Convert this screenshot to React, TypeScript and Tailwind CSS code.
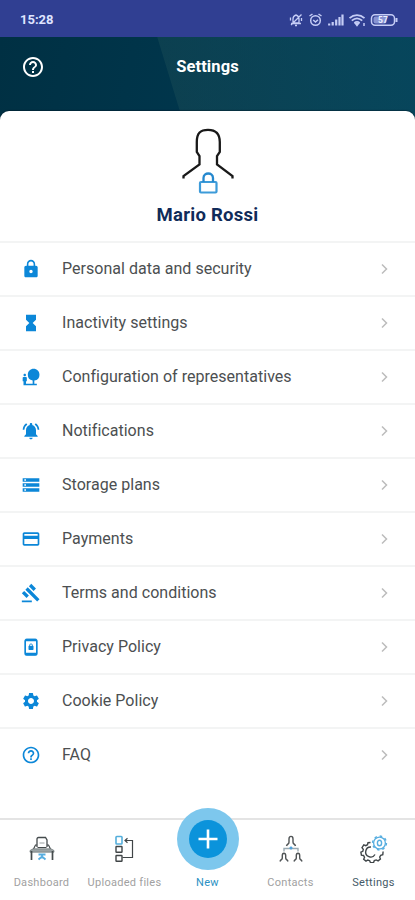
import type { ReactNode } from 'react';
import {
  MdLock, MdHourglassFull, MdNaturePeople, MdNotificationsActive, MdStorage, MdPayment,
  MdGavel, MdSettings, MdHelpOutline,
} from 'react-icons/md';

function PrivacyIcon({ className }: { className?: string }) {
  return (
    <svg className={className} viewBox="0 0 24 24" fill="none" stroke="currentColor">
      <rect x="5" y="3" width="14" height="18.500" rx="2" strokeWidth="2" />
      <path d="M5.500 3.500h13M5.500 20.500h13" strokeWidth="3" />
      <rect x="9" y="10.500" width="6" height="5" rx=".8" fill="currentColor" stroke="none" />
      <path d="M10.200 11V9.800c0-2 3.600-2 3.600 0V11" strokeWidth="1" />
    </svg>
  );
}

const rows = [
  { label: 'Personal data and security', Icon: MdLock },
  { label: 'Inactivity settings', Icon: MdHourglassFull },
  { label: 'Configuration of representatives', Icon: MdNaturePeople },
  { label: 'Notifications', Icon: MdNotificationsActive },
  { label: 'Storage plans', Icon: MdStorage },
  { label: 'Payments', Icon: MdPayment },
  { label: 'Terms and conditions', Icon: MdGavel },
  { label: 'Privacy Policy', Icon: PrivacyIcon },
  { label: 'Cookie Policy', Icon: MdSettings },
  { label: 'FAQ', Icon: MdHelpOutline },
];

function StatusBar() {
  return (
    <div className="flex h-[37px] items-center justify-between bg-[#303f92] pt-[2px] pr-[17px] pl-[20px] text-[#dfe4ff]">
      <span className="text-[13px] leading-4 font-bold">15:28</span>
      <svg width="109" height="16" viewBox="0 0 109 16" fill="none" stroke="#c5cdf6" strokeWidth="1.500">
        <path d="M4 11V7c0-2 1.200-3.500 3-4 1.800.5 3 2 3 4v4zM2 11.500h10M6 13.500h2M2 13 12.500 2.500M1.500 5.500v3M12.500 6v3" strokeWidth="1.300" />
        <circle cx="26.500" cy="8.500" r="4.800" />
        <path d="m24.200 8 2.300 2 2.500-2.200M20.500 4l3-2M32.500 4l-3-2" />
        <path d="M40.200 13.500v-2M43.700 13.500V10M47.200 13.500V7.500M50.500 13.500V5M53.500 13.500V2.500" strokeWidth="2.200" />
        <path d="M60.500 6.200c4.500-4 10.500-4 15 0M62.800 8.600c3.200-2.800 7.200-2.800 10.400 0M65.400 11c1.600-1.300 3.600-1.300 5.200 0" strokeWidth="1.800" />
        <path d="M66.500 11.500 68 13.500l1.500-2z" fill="#c5cdf6" />
        <path d="M75 11v3" />
        <rect x="82.500" y="2.700" width="23" height="10.600" rx="3.500" />
        <path d="M107.500 6v4" strokeWidth="2" />
        <rect x="84.500" y="4.500" width="13" height="7" rx="2" fill="#8793d2" stroke="none" />
        <text x="94" y="11.300" textAnchor="middle" fill="#eef1ff" stroke="none" fontSize="8.500" fontWeight="700">57</text>
      </svg>
    </div>
  );
}

function Profile() {
  return (
    <section className="flex h-[129.500px] flex-col items-center rounded-t-[9px] bg-white pt-[17px] shadow-[0_-1px_1px_rgba(0,20,35,.4)]">
      <svg width="54" height="66" viewBox="0 0 54 66" fill="none">
        <path d="M2.500 50.500v-2.500l16-11.500v-8.500l-2.700-4V14C15.800 5 19.500 1.800 27 1.800S38.800 5 38.800 14v10L36 28v8.500L51.500 48v2.500" stroke="#191919" strokeWidth="2.300" />
        <rect x="19" y="54" width="16.500" height="10.500" rx="1" stroke="#3d9bd9" strokeWidth="2.200" />
        <path d="M22.500 54v-4c0-6 9.500-6 9.500 0v4" stroke="#2588ce" strokeWidth="2.300" />
      </svg>
      <h2 className="mt-[9px] text-[18.500px] leading-[24px] font-bold tracking-[.25px] text-[#102b59]">Mario Rossi</h2>
    </section>
  );
}

function DeskIcon() {
  return (
    <svg width="26" height="26" viewBox="0 0 26 26" fill="none" stroke="#454b4d" strokeWidth="1.200">
      <path d="M8 11V3c0-1 .5-1.500 1.500-1.500h7L18 4v7" strokeWidth="1.300" />
      <path d="M10.500 7h5" stroke="#9aa0a2" strokeWidth="1" />
      <path d="M8 9H6.500L4.500 13M18 9h1.500l2 4M8.500 11.500h9" />
      <path d="M1 14.500 4 12.800h18l3 1.700v1.700H1z" fill="#9ba3a5" stroke="#6b7476" strokeWidth=".7" />
      <path d="M2.500 15v9M23.500 15v9" strokeWidth="1.700" />
      <path d="M13 17.500v5M9.500 23.500l3.500-3 3.500 3M9.500 18.500h7" stroke="#56ade0" strokeWidth="1.800" />
    </svg>
  );
}

function FilesIcon() {
  return (
    <svg width="22" height="28" viewBox="0 0 22 28" fill="none" stroke="#404547" strokeWidth="1.400">
      <rect x="2" y="1.500" width="6" height="7.500" rx=".8" stroke="#54aedb" strokeWidth="1.600" />
      <rect x="2" y="11.500" width="6" height="5.800" rx=".5" />
      <rect x="2" y="20.500" width="6" height="5.800" rx=".5" />
      <path d="M8.500 22.500h10V5.500h-7M13.500 3.300 11 5.500l2.500 2.200" strokeWidth="1.200" />
    </svg>
  );
}

function ContactsIcon() {
  return (
    <svg width="24" height="28" viewBox="0 0 24 28" fill="none" stroke="#505456" strokeWidth="1.400">
      <path d="M7.500 11c.5-2 2.800-2 2.500-4V4c0-3.500 4-3.500 4 0v3c-.3 2 2 2 2.500 4" />
      <path d="M1 26.500c.5-2 2.500-1.800 2.300-3.500v-2.500c0-3 3.400-3 3.400 0V23C6.500 24.700 8.500 24.500 9 26.500M15 26.500c.5-2 2.500-1.800 2.300-3.500v-2.500c0-3 3.400-3 3.400 0V23c-.2 1.700 1.800 1.500 2.300 3.500" />
      <path d="M5 16.500V13.500h14v3" stroke="#9aaab2" />
      <path d="M12 11.500v3M10.500 13h3" stroke="#4b9fdb" strokeWidth="1.600" />
    </svg>
  );
}

function GearsIcon() {
  return (
    <svg width="28" height="28" viewBox="0 0 28 28" fill="none">
      <path d="M10.500 7.500 8 7.700l-.5 2-1.700 1-2-.9L2 12.600l1.300 1.700-.5 2L.9 17.200l.5 2.900 2.100.4 1 1.700-.8 2 2.300 1.900 1.800-1.100 1.900.7.800 2 3 0 .8-2.100 1.900-.7 1.900 1 2.300-1.900-.7-2 1-1.700 2.100-.5.3-3.300" stroke="#3f4548" strokeWidth="1.400" />
      <path d="M15 19.500a5 5 0 1 1-4-7.500" stroke="#3f4548" strokeWidth="1.400" />
      <circle cx="19.500" cy="8" r="5.900" stroke="#58aee0" strokeWidth="1.300" />
      <circle cx="19.500" cy="8" r="6.900" stroke="#58aee0" strokeWidth="1.500" strokeDasharray="2.500 2.920" />
      <ellipse cx="19.500" cy="8" rx="2.100" ry="2.800" stroke="#58aee0" strokeWidth="1.400" />
    </svg>
  );
}

function Tab({ label, children, active = false }: { label: string; children: ReactNode; active?: boolean }) {
  return (
    <div className={`flex flex-1 flex-col items-center pt-[14px] text-[11px] leading-[14px] tracking-[.28px] whitespace-nowrap ${active ? 'text-[#455a68]' : 'text-[#a1a1a1]'}`}>
      <div className="flex h-[30px] items-center">{children}</div>
      <span className="mt-[12px]">{label}</span>
    </div>
  );
}

export default function App() {
  return (
    <div className="flex h-[900px] w-[415px] flex-col overflow-hidden bg-white font-[Roboto,sans-serif]">
      <StatusBar />
      <div className="bg-[linear-gradient(73deg,transparent_0_45.900%,rgba(30,80,88,.4)_46.100%,rgba(10,74,98,.65)_100%),linear-gradient(100deg,#003043,#00364c_45%,#003e51)]">
        <header className="grid h-[74px] grid-cols-[1fr_auto_1fr] items-start pt-[18px] text-white">
          <MdHelpOutline className="ml-[21px] size-[24px]" />
          <h1 className="text-[16.500px] leading-[24px] font-bold tracking-[.1px]">Settings</h1>
        </header>
        <Profile />
      </div>
      <main className="flex-1">
        {rows.map(({ label, Icon }) => (
          <div key={label} className="flex h-[54.050px] items-center border-t-2 border-[#f3f4f4] px-[21px] pt-[1px]">
            <Icon className="size-[20px] text-[#0c87d8]" />
            <span className="ml-[21px] flex-1 text-[16px] leading-5 tracking-[.03px] text-[#4c4f51]">{label}</span>
            <svg width="20" height="20" viewBox="0 0 20 20" fill="none" stroke="#bcbcbc" strokeWidth="1.500">
              <path d="m8 5.500 4.500 4.500L8 14.500" />
            </svg>
          </div>
        ))}
      </main>
      <nav className="flex h-[82px] shrink-0 border-t-2 border-[#e4e4e4] bg-white">
        <Tab label="Dashboard"><DeskIcon /></Tab>
        <Tab label="Uploaded files"><FilesIcon /></Tab>
        <div className="flex flex-1 flex-col items-center text-[11px] leading-[14px] tracking-[.3px] text-[#2b91c3]">
          <div className="-mt-[12px] flex size-[62px] shrink-0 items-center justify-center rounded-full bg-[#7dc7ed]">
            <div className="flex size-[38px] items-center justify-center rounded-full bg-[#0b93db]">
              <svg width="22" height="22" viewBox="0 0 22 22" stroke="white" strokeWidth="2.600"><path d="M11 1.500v19M1.500 11h19" /></svg>
            </div>
          </div>
          <span className="mt-[6px]">New</span>
        </div>
        <Tab label="Contacts"><ContactsIcon /></Tab>
        <Tab label="Settings" active><GearsIcon /></Tab>
      </nav>
    </div>
  );
}
